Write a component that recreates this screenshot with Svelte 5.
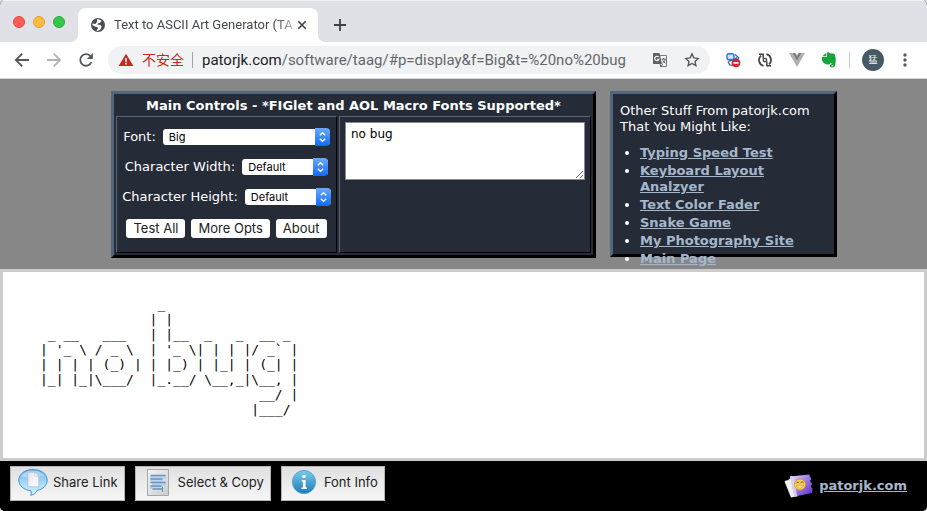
<script>
  const art = [
    '               _',
    '              | |',
    ' _ __   ___   | |__  _   _  __ _ ',
    "| '_ \\ / _ \\  | '_ \\| | | |/ _` |",
    '| | | | (_) | | |_) | |_| | (_| |',
    '|_| |_|\\___/  |_.__/ \\__,_|\\__, |',
    '                            __/ |',
    '                           |___/ ',
  ].join('\n');

  const links = [
    'Typing Speed Test',
    'Keyboard Layout Analzyer',
    'Text Color Fader',
    'Snake Game',
    'My Photography Site',
    'Main Page',
  ];

  let text = $state('no bug');
</script>

{#snippet picker(id, label, value, wide)}
  <div class="field" class:wide>
    <label for={id}>{label}</label>
    <div class="select">
      <select {id}><option>{value}</option></select>
      <svg class="stepper" viewBox="0 0 15 17" aria-hidden="true">
        <path d="M4.8 6.8 7.5 4.2l2.7 2.6M4.8 10.2l2.7 2.6 2.7-2.6" />
      </svg>
    </div>
  </div>
{/snippet}

<div class="window">
  <div class="tabs">
    <div class="lights"><i class="red"></i><i class="amber"></i><i class="green"></i></div>
    <div class="tab">
      <svg class="globe" viewBox="0 0 16 16" aria-hidden="true">
        <circle cx="8" cy="8" r="7" fill="#4b4f54" />
        <path d="M7 2.200c1.800-.3 3.600.6 4.700 1.900L9.600 6.100 8 6.300l-.6 1.200 3.200.6 1 1.500-1 2.700-2.800 1.600-1.400-.3 1.600-1.800-.4-1.600-2.600-.6L2.400 8l.2-1.600 3 .6L7 4.800z" fill="#fff" />
      </svg>
      <span class="title">Text to ASCII Art Generator (TA</span>
      <button class="bare close" aria-label="Close tab">
        <svg width="10" height="10" viewBox="0 0 10 10"><path d="m1.3 1.3 7.4 7.4m0-7.4L1.3 8.7" stroke="#3f4246" stroke-width="1.6" fill="none" /></svg>
      </button>
    </div>
    <button class="bare new" aria-label="New tab">
      <svg width="14" height="14" viewBox="0 0 14 14"><path d="M7 1v12M1 7h12" stroke="#3f4246" stroke-width="1.8" fill="none" /></svg>
    </button>
  </div>

  <div class="toolbar">
    <button class="bare" aria-label="Back">
      <svg width="20" height="20" viewBox="0 0 20 20"><path d="M17 10H4m6.2-6.4L3.8 10l6.4 6.4" class="line" /></svg>
    </button>
    <button class="bare dim" aria-label="Forward">
      <svg width="20" height="20" viewBox="0 0 20 20"><path d="M3 10h13M9.8 3.6l6.4 6.4-6.4 6.4" class="line" /></svg>
    </button>
    <button class="bare" aria-label="Reload">
      <svg width="20" height="20" viewBox="0 0 20 20"><path d="M15.4 12.2a5.8 5.8 0 1 1-1.2-6.3l1.6 1.6" class="line" /><path d="M16.9 3v6h-6z" fill="#54585d" /></svg>
    </button>
    <div class="omnibox">
      <svg width="16" height="14" viewBox="0 0 16 14" aria-hidden="true">
        <path d="M8 .8 15.4 13H.6z" fill="#c5291f" /><path d="M7.2 5h1.6v3.8H7.2zM7.2 9.8h1.6v1.6H7.2z" fill="#fff" />
      </svg>
      <span class="insecure">不安全</span>
      <span class="url"><b>patorjk.com</b>/software/taag/#p=display&amp;f=Big&amp;t=%20no%20bug</span>
      <button class="bare" aria-label="Translate">
        <svg width="16" height="16" viewBox="0 0 16 16">
          <path d="M6 3.5h8.500v11H8" fill="#f4f5f6" stroke="#777b80" />
          <path d="M1 1h6.500l2.500 11H1z" fill="#5f6368" />
          <path d="M6.600 5A2.200 2.200 0 1 0 7 7.300H5" fill="none" stroke="#fff" stroke-width="1.1" />
          <path d="M9.500 7.200h4.200m-2-1.200v1.200m1.400 0c-.4 2-1.600 3.200-2.600 4m.2-2.800c.5 1.200 1.400 2.200 2.600 2.800M8 12l1 3 1.500-3" fill="none" stroke="#5f6368" />
        </svg>
      </button>
      <button class="bare" aria-label="Bookmark this page">
        <svg width="16" height="16" viewBox="0 0 16 16"><path d="m8 1.900 1.800 4 4.400.5L11 9.400l.9 4.300L8 11.500l-3.900 2.200.9-4.300-3.200-3 4.400-.5z" fill="none" stroke="#54585d" stroke-width="1.400" /></svg>
      </button>
    </div>
    <div class="extensions">
      <svg width="16" height="16" viewBox="0 0 16 16" aria-hidden="true">
        <rect x="2" y="1.800" width="7" height="6" rx="2" fill="#c8e6ff" stroke="#2f6fe8" stroke-width="1.400" />
        <path d="m10 2.400 3.600 3.400-1 4M3 9.400l1.600 3.400 4 1M4 9l5-1.400 3-2" fill="none" stroke="#3c62b8" stroke-width="1.300" />
        <circle cx="11" cy="10.800" r="4.400" fill="#e0202c" /><path d="M8.400 10h5.200v1.700H8.400z" fill="#fff" />
      </svg>
      <svg width="16" height="16" viewBox="0 0 16 16" aria-hidden="true">
        <path d="M6.600 13.900A6 6 0 0 1 4 3.600M9.400 2.100a6 6 0 0 1 2.600 10.300" fill="none" stroke="#3c4043" stroke-width="1.700" />
        <path d="M2 1.600h4.900v4.900H5.400V3.100H2zM14 14.400H9.100V9.500h1.500v3.400H14z" fill="#3c4043" />
        <circle cx="8" cy="8" r="1.700" fill="none" stroke="#3c4043" stroke-width="1.300" />
      </svg>
      <svg width="16" height="16" viewBox="0 0 16 16" aria-hidden="true">
        <path d="M0 1h3.400L8 9l4.600-8H16L8 15z" fill="#b0b0b0" /><path d="M3.400 1h3L8 3.800 9.600 1h3L8 9z" fill="#7f7f7f" />
      </svg>
      <svg width="16" height="16" viewBox="0 0 16 16" aria-hidden="true">
        <path d="M5.200.8v3.400H1.300zM6 .4c1.400-.3 2.500.1 3 .9 2 .2 4 .4 4.600 1 .9 1.200 1.300 4.700 1 8-.2 3-.8 5.100-3 5.300-1.800.1-2.700-.8-2.600-2 .1-1.300 1.200-1.800 2.700-1.600-.6-.6-1.700-.8-2.800-.5-.3.800-1.300 1.100-2.600.9C3 12 1.200 10.400.8 7 .7 6 .8 5.500 1 5h4.500c.4 0 .5-.2.5-.5z" fill="#15a53b" />
        <path d="M10.600 13.800h1.700" stroke="#fff" stroke-width="1" /><circle cx="12.400" cy="6.600" r=".7" fill="#0b7a2b" />
      </svg>
    </div>
    <span class="divider"></span>
    <button class="bare avatar" aria-label="Profile">猛</button>
    <button class="bare menu" aria-label="Menu">
      <svg width="8" height="16" viewBox="0 0 8 16" fill="#54585d"><circle cx="4" cy="3" r="1.700" /><circle cx="4" cy="8" r="1.700" /><circle cx="4" cy="13" r="1.700" /></svg>
    </button>
  </div>

  <header>
    <section class="panel controls">
      <h1>Main Controls - *FIGlet and AOL Macro Fonts Supported*</h1>
      <div class="cells">
        <div class="cell options">
          {@render picker('font', 'Font:', 'Big', true)}
          {@render picker('width', 'Character Width:', 'Default', false)}
          {@render picker('height', 'Character Height:', 'Default', false)}
          <div class="buttons">
            <button>Test All</button>
            <button>More Opts</button>
            <button>About</button>
          </div>
        </div>
        <div class="cell entry">
          <textarea aria-label="Text to draw" bind:value={text}></textarea>
        </div>
      </div>
    </section>

    <aside class="panel other">
      <p>Other Stuff From patorjk.com That You Might Like:</p>
      <ul>
        {#each links as link}
          <li><a href="#top">{link}</a></li>
        {/each}
      </ul>
    </aside>
  </header>

  <main><pre>{art}</pre></main>

  <footer>
    <button>
      <svg width="30" height="30" viewBox="0 0 30 30" aria-hidden="true">
        <defs>
          <linearGradient id="bubble" x1="0" y1="0" x2="0" y2="1"><stop offset="0" stop-color="#6cb4ec" /><stop offset=".55" stop-color="#a9dcfb" /><stop offset="1" stop-color="#d8f6ff" /></linearGradient>
          <linearGradient id="paper" x1="0" y1="0" x2="1" y2="1"><stop offset="0" stop-color="#e4e4ee" /><stop offset="1" stop-color="#fff" /></linearGradient>
        </defs>
        <path d="M15 2.500C7 2.500.8 7 .8 13.200c0 5.600 5.200 9.800 12 10.500.8 1.800.6 3.400-.2 4.600 3.200-.6 5.600-2.300 6.600-4.900 5.800-1.200 10-5.200 10-10.200C29.200 7 23 2.500 15 2.500z" fill="url(#bubble)" stroke="#4793cf" />
        <path d="M15 3.800c-5 0-9.600 2-11.600 5.400 4 1.600 7 1.200 11 .4s8-1.400 12-.2C24.400 5.800 20 3.800 15 3.800z" fill="#fff" opacity=".35" />
        <path d="M9.800 5.200h7l4 4v10.600h-11z" fill="url(#paper)" stroke="#b5bccb" stroke-width=".8" /><path d="M16.800 5.200v4h4z" fill="#fff" stroke="#b5bccb" stroke-width=".7" />
      </svg>
      Share Link
    </button>
    <button>
      <svg width="30" height="30" viewBox="0 0 30 30" aria-hidden="true">
        <defs><linearGradient id="sheet" x1="0" y1="0" x2="1" y2="1"><stop offset="0" stop-color="#f3f3f3" /><stop offset="1" stop-color="#c9cccf" /></linearGradient></defs>
        <path d="M4.500 2.500h21v26h-21z" fill="url(#sheet)" stroke="#a5a8ab" />
        <path d="M7 8h16v4h-3v3h3v4h-3v3H7v-4h2v-3H7z" fill="#b8d3ee" />
        <path d="M7.500 8.500h15M7.500 12h12M7.500 15.500h15M7.500 19h11M9.500 22h10" stroke="#6f93b8" stroke-width="1.300" /><path d="M19.500 20v5" stroke="#7f8994" />
      </svg>
      Select &amp; Copy
    </button>
    <button>
      <svg width="30" height="30" viewBox="0 0 30 30" aria-hidden="true">
        <defs><linearGradient id="info" x1="0" y1="0" x2="0" y2="1"><stop offset="0" stop-color="#79cbe9" /><stop offset="1" stop-color="#1c7dbb" /></linearGradient></defs>
        <circle cx="15" cy="15" r="11.600" fill="url(#info)" stroke="#4a9cc4" stroke-width=".8" />
        <circle cx="15" cy="9.500" r="1.800" fill="#fff" /><path d="M12.600 13h4v7.600h1.400V22h-5.600v-1.400h1.500v-6.200h-1.300z" fill="#fff" />
      </svg>
      Font Info
    </button>
    <a class="home" href="#top">
      <svg width="30" height="24" viewBox="0 0 30 24" aria-hidden="true">
        <defs><linearGradient id="ticket" x1="0" y1="0" x2="1" y2="1"><stop offset="0" stop-color="#efeaff" /><stop offset=".4" stop-color="#a58af0" /><stop offset="1" stop-color="#5a26c4" /></linearGradient></defs>
        <path d="m.5 7.500 2-1.300 1 .4L6.500 4l8 18-7.500 1.500z" fill="#f2f0ee" />
        <path d="M6 2.500 25.500.6l.3 2.400 1 .4.300 2.200-.9.600.4 2.200 1 .4.300 2.200-.9.600.4 2.200 1 .4.300 2.200-.9.600.3 2L10.500 22.600z" fill="url(#ticket)" />
        <path d="M6 2.500 9.500 2.200l3.600 20-2.600.4z" fill="#d9d0f8" />
        <circle cx="16" cy="10.500" r="5.600" fill="#f9cb4c" stroke="#d98d1c" stroke-width=".7" />
        <path d="M12.300 9.300c.8-1.400 2-1.400 2.800-.2m1.600-.2c.8-1.400 2-1.400 2.800-.2" fill="none" stroke="#4c5a78" /><path d="M12.400 11.800c1.800 3 5.400 2.800 7-.6-2.400.8-4.600 1-7 .6z" fill="#fff" stroke="#b5741c" stroke-width=".5" />
      </svg>
      <span>patorjk.com</span>
    </a>
  </footer>
</div>

<style>
  :global(body) { background: #dcdcdc; }
  * { box-sizing: border-box; }
  button { font: inherit; color: inherit; cursor: pointer; }
  svg { display: block; flex: none; }

  .window {
    display: flex;
    flex-direction: column;
    min-height: 100vh;
    overflow: hidden;
    border-radius: 5px;
    background: #000;
    font: 13px/16px 'DejaVu Sans', Verdana, sans-serif;
  }
  .bare {
    display: flex;
    align-items: center;
    justify-content: center;
    padding: 0;
    border: 0;
    background: none;
  }

  .tabs {
    display: flex;
    align-items: flex-end;
    height: 42px;
    padding-left: 13px;
    border-top: 1px solid #f2f2f2;
    background: #dfe1e6;
    color: #45494d;
  }
  .lights { display: flex; gap: 8px; align-self: center; width: 65px; }
  .lights i { width: 12px; height: 12px; border-radius: 50%; }
  .red { background: #fc5b57; border: 1px solid #e2463f; }
  .amber { background: #fdbc40; border: 1px solid #e1a032; }
  .green { background: #34c84a; border: 1px solid #27aa35; }
  .tab {
    position: relative;
    display: flex;
    align-items: center;
    width: 240px;
    height: 34px;
    padding: 0 11px 0 12px;
    border-radius: 8px 8px 0 0;
    background: #fff;
  }
  .tab::before,
  .tab::after {
    content: '';
    position: absolute;
    bottom: 0;
    width: 8px;
    height: 8px;
  }
  .tab::before { right: 100%; background: radial-gradient(circle at 0 0, transparent 8px, #fff 8px); }
  .tab::after { left: 100%; background: radial-gradient(circle at 100% 0, transparent 8px, #fff 8px); }
  .globe { width: 16px; height: 16px; }
  .title {
    flex: 1;
    margin-left: 8px;
    white-space: nowrap;
    font: 13px/20px Roboto, sans-serif;
    mask-image: linear-gradient(90deg, #000 88%, #0004);
  }
  .close { width: 10px; height: 14px; }
  .new { width: 28px; height: 34px; margin-left: 8px; }

  .toolbar {
    display: flex;
    align-items: center;
    gap: 12px;
    height: 37px;
    padding: 0 18px 0 12px;
    border-bottom: 1px solid #d4d5d8;
    background: #fff;
  }
  .line { fill: none; stroke: #54585d; stroke-width: 1.8; }
  .dim { opacity: 0.45; }
  .omnibox {
    display: flex;
    flex: 1;
    align-items: center;
    height: 28px;
    padding: 0 10px;
    border-radius: 14px;
    background: #f1f2f4;
    font: 14px/20px Roboto, 'Noto Sans CJK SC', sans-serif;
  }
  .insecure {
    margin-left: 8px;
    padding-right: 8px;
    border-right: 1px solid #a0a3a7;
    color: #c5291f;
    line-height: 16px;
  }
  .url { flex: 1; margin-left: 9px; color: #63676b; font-size: 15px; white-space: nowrap; }
  .url b { color: #202124; font-weight: 400; }
  .omnibox button { margin-left: 16px; }
  .extensions { display: flex; gap: 16px; margin-left: 3px; }
  .divider { width: 1px; height: 16px; background: #c4c6c9; }
  .avatar {
    width: 22px;
    height: 22px;
    border-radius: 50%;
    background: #455a64;
    color: #fff;
    font: 9px/22px 'Noto Sans CJK SC', sans-serif;
  }
  .menu { margin-left: 5px; }

  header {
    display: flex;
    gap: 14px;
    justify-content: center;
    height: 190px;
    padding: 12px 0 0 21px;
    background: #878787;
    color: #fff;
  }
  .panel {
    border: 3px solid;
    border-color: #52677b #000 #000 #52677b;
    background: #252b37;
  }
  .controls { width: 485px; height: 167px; padding: 2px; }
  .other { width: 227px; height: 166px; padding: 9px 7px; }
  h1 { margin: 0; font-size: 13px; line-height: 20px; text-align: center; }
  .cells { display: flex; gap: 2px; }
  .cell {
    height: 137px;
    border: 1px solid;
    border-color: #52677b #000 #000 #52677b;
  }
  .options { width: 221px; padding: 10px 4px 0; }
  .entry { flex: 1; padding: 5px; }
  .field {
    display: flex;
    align-items: center;
    justify-content: center;
    gap: 7px;
    height: 20px;
    margin-bottom: 10px;
  }
  .select {
    position: relative;
    width: 86px;
    height: 18px;
  }
  .wide .select { width: 167px; }
  select {
    width: 100%;
    height: 16px;
    margin: 1px 0;
    padding: 0 6px;
    border: 0;
    border-radius: 3px;
    appearance: none;
    background: #fff;
    color: #000;
    font: 11px/16px Inter, sans-serif;
    display: block;
  }
  .stepper {
    position: absolute;
    top: 0;
    right: 0;
    width: 15px;
    height: 18px;
    border-radius: 0 4px 4px 0;
    background: linear-gradient(#6aabfb, #1268fb);
    fill: none;
    stroke: #fff;
    stroke-width: 1.4;
    pointer-events: none;
  }
  .buttons { display: flex; justify-content: center; gap: 6px; padding-top: 2px; }
  .buttons button {
    height: 19px;
    padding: 0 7px;
    border: 0;
    border-radius: 3px;
    background: #fff;
    color: #222;
    font: 13px/19px Inter, sans-serif;
    white-space: nowrap;
  }
  textarea {
    display: block;
    width: 240px;
    height: 58px;
    padding: 3px 5px;
    border: 1px solid #8a8a8a;
    background: #fff;
    color: #000;
    font: 12px/16px 'DejaVu Sans', Verdana, sans-serif;
    resize: both;
  }
  p { margin: 0 0 10px; }
  ul { margin: 0; padding-left: 20px; }
  li { margin-bottom: 2px; }
  a { color: #a5b7cc; font-weight: 700; }

  main {
    flex: 1;
    border: 3px solid #ccc;
    background: #fff;
  }
  pre {
    margin: 0;
    padding: 25px 37px;
    color: #000;
    font: 13px/15px 'DejaVu Sans Mono', monospace;
  }

  footer {
    display: flex;
    gap: 10px;
    padding: 5px 20px 10px 10px;
    background: #000;
  }
  footer button {
    display: flex;
    align-items: center;
    gap: 5px;
    height: 35px;
    padding: 0 6px 3px 7px;
    border: 1px solid #b4b4b4;
    background: linear-gradient(#e0e0e0, #f6f6f6);
    color: #222;
    font: 13px/16px Inter, sans-serif;
    white-space: nowrap;
  }
  .home {
    display: flex;
    align-items: center;
    gap: 5px;
    margin-left: auto;
    padding-top: 4px;
  }
</style>
